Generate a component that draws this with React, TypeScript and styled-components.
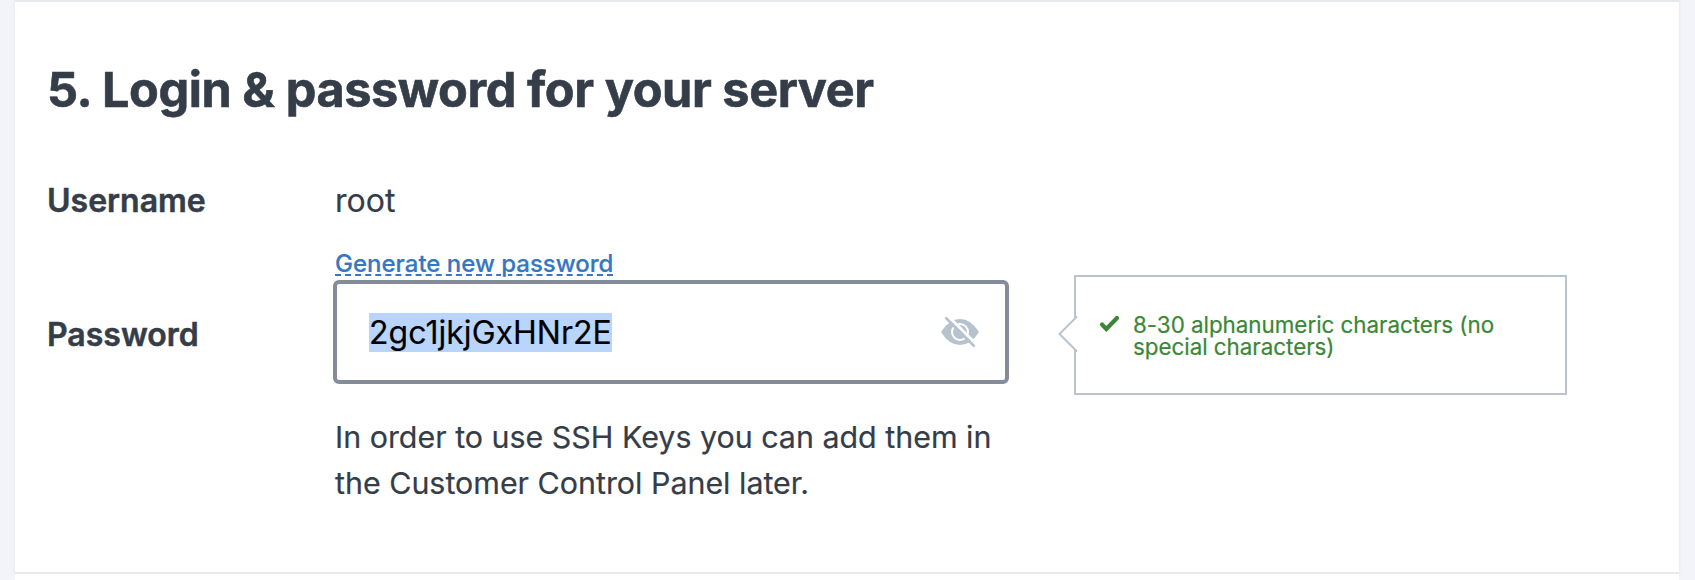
import React from 'react';
import styled, { createGlobalStyle } from 'styled-components';

const Global = createGlobalStyle`
  * { box-sizing: border-box; }
  body { margin: 0; background: #f3f4fa; font-family: Inter, sans-serif; color: #343d48; -webkit-text-stroke: .2px currentColor; }
`;
const Page = styled.main`height: 580px; overflow: hidden; padding: 0 15px; width: 1694px;`;
const Card = styled.section`
  height: 574px; background: #fff; padding: 62px 31px 0 32px;
  border: solid #e6eaee; border-width: 2px 0; box-shadow: 0 0 3px rgba(80, 90, 120, .1);
`;
const NextCard = styled.section`height: 6px; background: #fff;`;
const Title = styled.h2`
  margin: 0; font-size: 48.64px; line-height: 52px; font-weight: 700;
  white-space: nowrap; letter-spacing: -.0088em; -webkit-text-stroke-width: .6px;
`;
const Row = styled.div<{ $top: number }>`display: flex; margin-top: ${p => p.$top}px;`;
const Label = styled.div<{ $top?: number }>`
  width: 288px; flex: none; font-size: 32px; line-height: 40px; font-weight: 600;
  padding-top: ${p => p.$top || 0}px; -webkit-text-stroke-width: .5px;
`;
const Value = styled.div`font-size: 32px; line-height: 40px;`;
const Column = styled.div`width: 676px; flex: none;`;
const Generate = styled.a`
  display: block; width: max-content; height: 30px; font-size: 24px; line-height: 28px; font-weight: 500;
  color: #3577c1; text-decoration: underline dashed 2px; text-underline-offset: 2px;
`;
const Field = styled.div`
  height: 104px; margin-left: -2px; width: 676px; border: 4px solid #848c99; border-radius: 6px;
  display: flex; align-items: center; justify-content: space-between; padding: 0 26px 0 32px;
`;
const Selected = styled.span`background: #b9d5fb; color: #000; font-size: 32px; line-height: 39px; letter-spacing: .03px;`;
const Help = styled.p`margin: 30px 0 0; font-size: 30.4px; line-height: 46px; white-space: nowrap;`;
const Hint = styled.aside`
  position: relative; width: 493px; height: 120px; margin: 25px 0 0 63px; flex: none;
  border: 2px solid #b8c4ce; display: flex; padding: 37px 0 0 23px; color: #3a8735;
`;
const HintText = styled.p`margin: 0 0 0 13px; font-size: 22.4px; line-height: 22.4px; letter-spacing: -.03px; white-space: nowrap;`;
const Pointer = styled.svg`position: absolute; left: -18px; top: 38px;`;
const Tick = styled.svg`margin-top: 1px; flex: none;`;

const EyeOff = () => (
  <svg width="38" height="32" viewBox="0 0 38 32" fill="none">
    <path d="M0 16Q8 3 19 3T38 16Q30 29 19 29T0 16Z" fill="#b6c2cd" />
    <circle cx="19" cy="16" r="8" stroke="#fff" strokeWidth="2" />
    <path d="M7 0L36 29" stroke="#fff" strokeWidth="3" />
    <path d="M4.500 1.500L33.500 30.500" stroke="#b6c2cd" strokeWidth="2.500" />
  </svg>
);

export default function App() {
  return (
    <>
      <Global />
      <Page>
        <Card>
          <Title>5. Login &amp; password for your server</Title>
          <Row $top={65}><Label>Username</Label><Value>root</Value></Row>
          <Row $top={29}>
            <Label $top={65}>Password</Label>
            <Column>
              <Generate>Generate new password</Generate>
              <Field><Selected>2gc1jkjGxHNr2E</Selected><EyeOff /></Field>
              <Help>In order to use SSH Keys you can add them in<br />the Customer Control Panel later.</Help>
            </Column>
            <Hint>
              <Pointer width="20" height="38" viewBox="0 0 20 38" fill="none">
                <path d="M18.500 2.500L2 19L18.500 35.500Z" fill="#fff" />
                <path d="M19 1.500L1.500 19L19 36.500" stroke="#b8c4ce" strokeWidth="2" />
              </Pointer>
              <Tick width="21" height="18" viewBox="0 0 21 18" fill="none">
                <path d="M3 9.500L7.300 14L18 3" stroke="currentColor" strokeWidth="4.200" strokeLinecap="round" />
              </Tick>
              <HintText>8-30 alphanumeric characters (no<br />special characters)</HintText>
            </Hint>
          </Row>
        </Card>
        <NextCard />
      </Page>
    </>
  );
}
